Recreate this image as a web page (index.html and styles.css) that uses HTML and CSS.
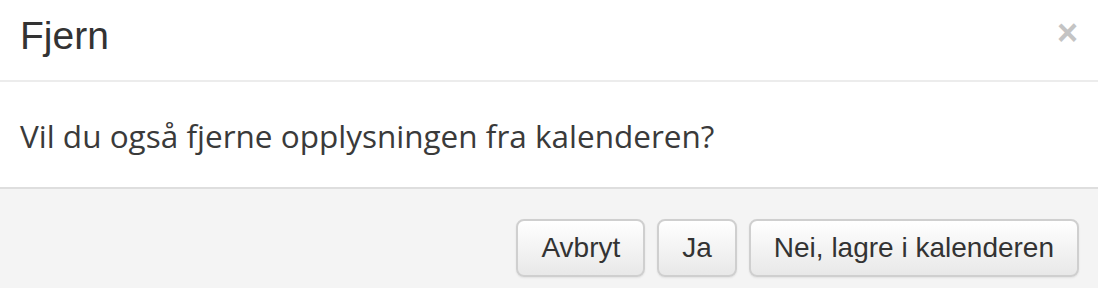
FILE: index.html
```html
<!DOCTYPE html>
<html lang="no">
<head>
<meta charset="utf-8">
<link rel="stylesheet" href="styles.css">
</head>
<body>
<div class="modal">
  <div class="modal-header">
    <h3 class="title">Fjern</h3>
    <button class="close" aria-label="Lukk">×</button>
  </div>
  <div class="modal-body">
    <p>Vil du også fjerne opplysningen fra kalenderen?</p>
  </div>
  <div class="modal-footer">
    <button class="btn">Avbryt</button>
    <button class="btn">Ja</button>
    <button class="btn">Nei, lagre i kalenderen</button>
  </div>
</div>
</body>
</html>
```
FILE: styles.css
```css
html, body {
  margin: 0;
  padding: 0;
  background: #fff;
}
.modal {
  width: 1098px;
  height: 288px;
  display: flex;
  flex-direction: column;
  background: #fff;
}
.modal-header {
  height: 82px;
  box-sizing: border-box;
  border-bottom: 2px solid #ececec;
  display: flex;
  align-items: flex-start;
  justify-content: space-between;
  padding: 13px 20px 0 20px;
}
.title {
  margin: 0;
  font-family: "Liberation Sans", Arial, sans-serif;
  font-weight: normal;
  font-size: 39px;
  line-height: 45px;
  color: #333;
}
.close {
  border: 0;
  background: none;
  padding: 0;
  margin-top: 2px;
  font-family: "Liberation Sans", Arial, sans-serif;
  font-weight: bold;
  font-size: 36px;
  color: #c4c4c4;
  line-height: 1;
}
.modal-body {
  height: 107px;
  box-sizing: border-box;
  border-bottom: 2px solid #dedede;
  display: flex;
  align-items: center;
  padding: 2px 20px 0 20px;
}
.modal-body p {
  margin: 0;
  font-family: "Open Sans", sans-serif;
  font-size: 31.5px;
  color: #3a3a3a;
}
.modal-footer {
  flex: 1;
  background: #f4f4f4;
  display: flex;
  justify-content: flex-end;
  align-items: flex-start;
  gap: 12px;
  padding: 30px 19px 0 0;
}
.btn {
  height: 58px;
  padding: 0 23px;
  border: 2px solid #cfcfcf;
  border-radius: 8px;
  background: linear-gradient(#ffffff, #e8e8e8);
  box-shadow: 0 1px 2px rgba(0,0,0,0.08);
  font-family: "Liberation Sans", Arial, sans-serif;
  font-size: 28px;
  color: #333;
}
```
